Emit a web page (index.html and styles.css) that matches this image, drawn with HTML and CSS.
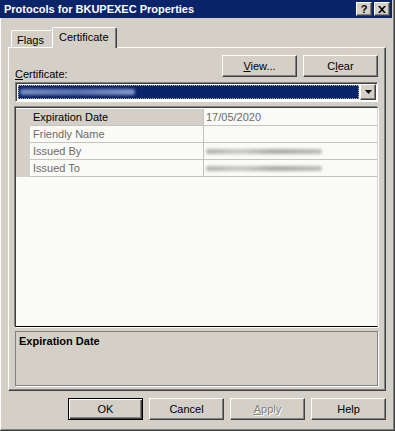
FILE: index.html
```html
<!DOCTYPE html>
<html lang="en">
	<head>
		<meta charset="UTF-8" />
		<title>Protocols for BKUPEXEC Properties</title>
		<link rel="stylesheet" href="styles.css">
	</head>
	<body>
		<div class="window">
			<div class="titlebar">
				<span class="title">Protocols for BKUPEXEC Properties</span>
				<div class="caption-btns">
					<span class="cap-btn">?</span>
					<span class="cap-btn">
						<svg width="8" height="7" viewBox="0 0 8 7">
							<path d="M0 0h2l2 2.3L6 0h2L5 3.5 8 7H6L4 4.7 2 7H0l3-3.5z" fill="#000"/>
						</svg>
					</span>
				</div>
			</div>
			<div class="client">
				<div class="tabs">
					<div class="tab">Flags</div>
					<div class="tab active">Certificate</div>
				</div>
				<div class="tab-panel">
					<div class="cert-row">
						<span class="cert-label"><u>C</u>ertificate:</span>
						<div class="cert-btns">
							<button class="btn"><u>V</u>iew...</button>
							<button class="btn">C<u>l</u>ear</button>
						</div>
					</div>
					<div class="combo">
						<div class="combo-sel"><span class="smudge smudge-light"></span></div>
						<div class="combo-drop">
							<svg width="7" height="4" viewBox="0 0 7 4"><path d="M0 0h7L3.5 4z" fill="#000"/></svg>
						</div>
					</div>
					<div class="propgrid">
						<table class="props">
							<tr class="selected">
								<td class="margin"></td>
								<td class="pname">Expiration Date</td>
								<td class="pval">17/05/2020</td>
							</tr>
							<tr>
								<td class="margin"></td>
								<td class="pname">Friendly Name</td>
								<td class="pval"></td>
							</tr>
							<tr>
								<td class="margin"></td>
								<td class="pname">Issued By</td>
								<td class="pval"><span class="smudge smudge-gray"></span></td>
							</tr>
							<tr>
								<td class="margin"></td>
								<td class="pname">Issued To</td>
								<td class="pval"><span class="smudge smudge-gray"></span></td>
							</tr>
						</table>
					</div>
					<div class="desc">Expiration Date</div>
				</div>
				<div class="dlg-btns">
					<button class="btn default">OK</button>
					<button class="btn">Cancel</button>
					<button class="btn disabled"><u>A</u>pply</button>
					<button class="btn">Help</button>
				</div>
			</div>
		</div>
	</body>
</html>
```
FILE: styles.css
```css
body {
	margin: 0;
	background: #d4d0c8;
	font-family: "Liberation Sans", Arial, sans-serif;
	font-size: 11px;
	color: #000;
}

.window {
	width: 395px;
	height: 431px;
	box-sizing: border-box;
	background: #d4d0c8;
	border-right: 1px solid #404040;
	border-bottom: 1px solid #404040;
	box-shadow: inset -1px -1px 0 #808080;
	display: flex;
	flex-direction: column;
}

.titlebar {
	height: 18px;
	margin-right: 2px;
	background: #0a246a;
	display: flex;
	align-items: center;
	justify-content: space-between;
	padding-left: 4px;
	padding-right: 2px;
}

.title {
	color: #fff;
	font-weight: bold;
	font-size: 11px;
}

.caption-btns {
	display: flex;
	gap: 2px;
}

.cap-btn {
	width: 14px;
	height: 12px;
	background: #d4d0c8;
	border: 1px solid;
	border-color: #fff #404040 #404040 #fff;
	box-shadow: inset -1px -1px 0 #808080;
	display: flex;
	align-items: center;
	justify-content: center;
	font-weight: bold;
	font-size: 11px;
	line-height: 12px;
}

.client {
	flex: 1;
	display: flex;
	flex-direction: column;
	padding: 9px 8px 0 8px;
	box-shadow: inset 1px 0 0 #fff;
}

.tabs {
	display: flex;
	align-items: flex-end;
	height: 20px;
	padding-left: 3px;
}

.tab {
	height: 17px;
	box-sizing: border-box;
	padding: 3px 5px 0 5px;
	border: 1px solid;
	border-bottom: none;
	border-color: #fff #404040 transparent #fff;
	border-radius: 2px 2px 0 0;
	box-shadow: inset -1px 0 0 #808080;
	width: 43px;
}

.tab.active {
	position: relative;
	z-index: 1;
	height: 21px;
	margin-bottom: -1px;
	margin-left: -2px;
	width: 65px;
	padding: 3px 0 0 6px;
	background: #d4d0c8;
}

.tab-panel {
	height: 344px;
	box-sizing: border-box;
	border: 1px solid;
	border-color: #fff #404040 #404040 #fff;
	box-shadow: inset -1px -1px 0 #808080;
	padding: 7px 7px 0 6px;
	display: flex;
	flex-direction: column;
}

.cert-row {
	display: flex;
	justify-content: space-between;
	align-items: flex-end;
	height: 22px;
}

.cert-label {
	position: relative;
	top: 3px;
}

.cert-btns {
	display: flex;
	gap: 6px;
}

.btn {
	width: 75px;
	height: 22px;
	box-sizing: border-box;
	background: #d4d0c8;
	border: 1px solid;
	border-color: #fff #404040 #404040 #fff;
	box-shadow: inset -1px -1px 0 #808080;
	font-family: "Liberation Sans", Arial, sans-serif;
	font-size: 11px;
	color: #000;
	padding: 0;
}

.btn.default {
	border-color: #000;
	box-shadow: inset 1px 1px 0 #fff, inset -1px -1px 0 #404040, inset -2px -2px 0 #808080;
}

.btn.disabled {
	color: #808080;
	text-shadow: 1px 1px 0 #fff;
}

.combo {
	margin-top: 5px;
	height: 20px;
	box-sizing: border-box;
	border: 1px solid;
	border-color: #808080 #fff #fff #808080;
	box-shadow: inset 1px 1px 0 #404040;
	background: #fff;
	display: flex;
	padding: 2px 1px 1px 2px;
	gap: 1px;
}

.combo-sel {
	flex: 1;
	background: #0a246a;
	outline: 1px dotted #b0b0b0;
	outline-offset: -1px;
	display: flex;
	align-items: center;
	padding-left: 2px;
	margin-bottom: 1px;
}

.combo-drop {
	width: 16px;
	box-sizing: border-box;
	background: #d4d0c8;
	border: 1px solid;
	border-color: #fff #404040 #404040 #fff;
	box-shadow: inset -1px -1px 0 #808080;
	display: flex;
	align-items: center;
	justify-content: center;
	margin-top: -1px;
}

.smudge {
	display: block;
	height: 6px;
	border-radius: 3px;
	filter: blur(1.5px);
}

.smudge-light {
	width: 115px;
	background: linear-gradient(90deg, #7c8fc0, #5d74b0 50%, #8a9ccc);
}

.smudge-gray {
	width: 116px;
	height: 5px;
	margin-top: 1px;
	background: linear-gradient(90deg, #b0b0b0, #c8c8c8 30%, #a8a8a8 60%, #bcbcbc);
}

.propgrid {
	margin-top: 5px;
	flex: 1;
	border: 1px solid;
	border-color: #404040 #d4d0c8 #000 #404040;
	box-shadow: -1px -1px 0 #808080, 1px 1px 0 #fff;
	background: #fafaf7;
	padding-top: 1px;
}

.props {
	border-collapse: collapse;
	width: 100%;
}

.props td {
	height: 16px;
	padding: 0;
	border-bottom: 1px solid #c4c4bc;
	white-space: nowrap;
}

.props .margin {
	width: 14px;
	background: #d4d0c8;
	border-bottom-color: #d4d0c8;
}

.props .pname {
	width: 170px;
	padding-left: 3px;
	color: #6b6b6b;
}

.props .pval {
	border-left: 1px solid #c4c4bc;
	padding-left: 2px;
	color: #6b6b6b;
}

.props .selected .pname {
	background: #d4d0c8;
	color: #000;
}

.desc {
	margin-top: 4px;
	margin-bottom: 4px;
	height: 55px;
	box-sizing: border-box;
	border: 1px solid #808080;
	box-shadow: 1px 1px 0 #fff;
	padding: 3px 3px;
	font-weight: bold;
}

.dlg-btns {
	display: flex;
	justify-content: flex-end;
	gap: 6px;
	margin-top: 7px;
}
```
